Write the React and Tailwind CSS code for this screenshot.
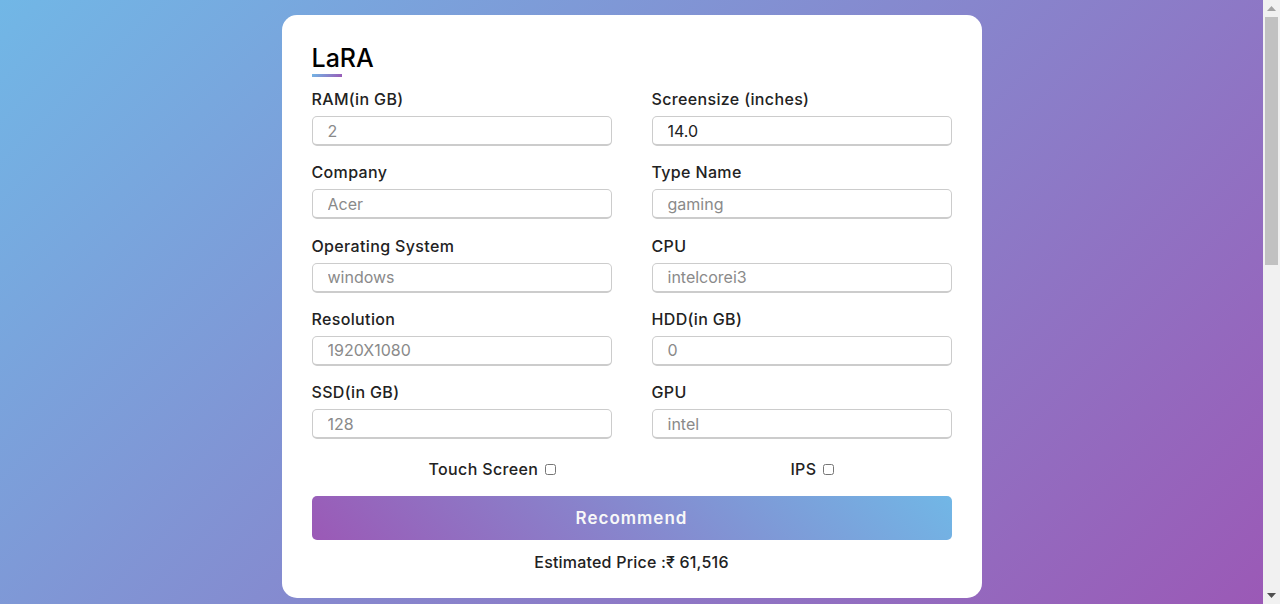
import React from 'react';

const fields = [
  { label: 'RAM(in GB)', placeholder: '2' },
  { label: 'Screensize (inches)', value: '14.0' },
  { label: 'Company', placeholder: 'Acer' },
  { label: 'Type Name', placeholder: 'gaming' },
  { label: 'Operating System', placeholder: 'windows' },
  { label: 'CPU', placeholder: 'intelcorei3' },
  { label: 'Resolution', placeholder: '1920X1080' },
  { label: 'HDD(in GB)', placeholder: '0' },
  { label: 'SSD(in GB)', placeholder: '128' },
  { label: 'GPU', placeholder: 'intel' },
];

const Field = ({ label, placeholder, value }) => (
  <div className="mb-[14.3px]">
    <div className="text-[16px] leading-[24px] font-medium tracking-[0.35px] text-[#222] mb-[5px]">{label}</div>
    <input
      type="text"
      placeholder={placeholder}
      defaultValue={value}
      className="w-full h-[30px] pl-[15px] text-[16px] text-[#222] placeholder:text-[#8a8a8a] border border-[#ccc] border-b-2 rounded-[5px] outline-none bg-white"
    />
  </div>
);

// fake classic scrollbar seen on the right of the screenshot
const Scrollbar = () => (
  <div className="w-[17px] h-[604px] bg-[#f1f1f1] flex flex-col">
    <div className="h-[17px] flex items-center justify-center">
      <svg width="9" height="5" viewBox="0 0 9 5"><path d="M0 5 L4.5 0 L9 5 Z" fill="#a3a3a3" /></svg>
    </div>
    <div className="mx-[2px] h-[248px] bg-[#c1c1c1]" />
    <div className="flex-1" />
    <div className="h-[17px] flex items-center justify-center">
      <svg width="9" height="5" viewBox="0 0 9 5"><path d="M0 0 L9 0 L4.5 5 Z" fill="#505050" /></svg>
    </div>
  </div>
);

function App() {
  return (
    <div className="flex h-[604px] overflow-hidden" style={{ fontFamily: 'Inter, "Open Sans", sans-serif' }}>
      <div className="flex-1 h-[604px] bg-[linear-gradient(135deg,#71b7e6,#9b59b6)] pt-[15px] flex justify-center">
        <div className="w-[700px] h-[583px] bg-white rounded-[15px] px-[30px] pt-[24.5px] pb-[24px]">
          {/* Title */}
          <div className="relative h-[37.5px] text-[25px] leading-[37.5px] font-medium text-black">
            LaRA
            <div className="absolute left-0 bottom-0 w-[30px] h-[3px] bg-[linear-gradient(135deg,#71b7e6,#9b59b6)]" />
          </div>

          <form className="mt-[10px]">
            <div className="grid grid-cols-2 gap-x-[40px]">
              {fields.map((f) => (
                <Field key={f.label} {...f} />
              ))}
            </div>

            <div className="mt-[4px] flex justify-around text-[16px] leading-[24px] font-medium tracking-[0.35px] text-[#222]">
              <label className="flex items-center">
                Touch Screen
                <input type="checkbox" className="ml-[7px] w-[11px] h-[11px]" />
              </label>
              <label className="flex items-center">
                IPS
                <input type="checkbox" className="ml-[7px] w-[11px] h-[11px]" />
              </label>
            </div>

            <button
              type="button"
              className="mt-[15px] w-full h-[44px] rounded-[5px] bg-[linear-gradient(-135deg,#71b7e6,#9b59b6)] text-[#f8f8f8] text-[17px] font-semibold tracking-[1px]"
            >
              Recommend
            </button>

            <div className="mt-[10px] text-center text-[16px] leading-[24px] font-medium tracking-[0.2px] text-[#222]">
              Estimated Price :₹ 61,516
            </div>
          </form>
        </div>
      </div>
      <Scrollbar />
    </div>
  );
}

export default App;
